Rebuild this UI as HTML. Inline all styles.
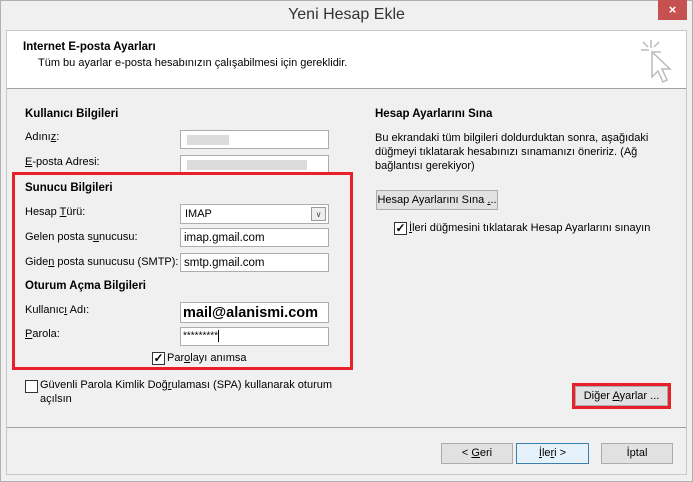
<!DOCTYPE html>
<html><head><meta charset="utf-8"><style>
*{margin:0;padding:0;box-sizing:border-box}
body{width:693px;height:482px;background:#f0f0f0;font-family:"Liberation Sans",sans-serif;font-size:11px;color:#000;position:relative;overflow:hidden}
.a{position:absolute;white-space:nowrap}
.b{font-weight:bold;font-size:11.5px}
.in{position:absolute;background:#fff;border:1px solid #abadb3;height:19px}
.btn{position:absolute;background:#e1e1e1;border:1px solid #acacac;text-align:center;line-height:18px;font-size:11px}
.cb{position:absolute;width:13px;height:13px;border:1px solid #333;background:#fff;font-size:12px;line-height:11px;text-align:center;font-weight:bold}
u{text-decoration:underline}
</style></head><body>
<div class="a" style="left:0;top:0;width:693px;height:482px;border:1px solid #b0b0b0"></div>
<div class="a" style="left:0;top:6px;width:693px;text-align:center;font-size:16px;color:#333">Yeni Hesap Ekle</div>
<div class="a" style="left:658px;top:0;width:29px;height:20px;background:#c75050;color:#fff;text-align:center;font-size:13px;line-height:20px;font-weight:bold">×</div>
<div class="a" style="left:6px;top:30px;width:681px;height:445px;border:1px solid #c8c8c8;background:#f0f0f0"></div>
<div class="a" style="left:7px;top:31px;width:679px;height:58px;background:#fff;border-bottom:1px solid #a0a0a0"></div>
<div class="a b" style="left:23px;top:41px">Internet E-posta Ayarları</div>
<div class="a" style="left:38px;top:57px">Tüm bu ayarlar e-posta hesabınızın çalışabilmesi için gereklidir.</div>
<svg class="a" style="left:638px;top:37px" width="40" height="50" viewBox="0 0 40 50" fill="none" stroke="#bbb" stroke-width="1.5">
<path d="M13 3v8M3 13h8M5 5l5 5M21 5l-5 5M15 15h8"/>
<path d="M14 15l0 25 6-6 5 11 4-2-5-11 8 0z" fill="#fff"/>
</svg>
<div class="a b" style="left:25px;top:108px">Kullanıcı Bilgileri</div>
<div class="a" style="left:25px;top:131px">Adını<u>z</u>:</div>
<div class="in" style="left:180px;top:130px;width:149px"><div style="position:absolute;left:6px;top:4px;width:42px;height:10px;background:#ccc;opacity:.7"></div></div>
<div class="a" style="left:25px;top:156px"><u>E</u>-posta Adresi:</div>
<div class="in" style="left:180px;top:155px;width:149px"><div style="position:absolute;left:6px;top:4px;width:120px;height:10px;background:#ccc;opacity:.7"></div></div>
<div class="a" style="left:12px;top:172px;width:341px;height:198px;border:3px solid #e8202a"></div>
<div class="a b" style="left:25px;top:182px">Sunucu Bilgileri</div>
<div class="a" style="left:25px;top:206px">Hesap <u>T</u>ürü:</div>
<div class="in" style="left:180px;top:204px;width:149px;height:20px;padding:3px 0 0 4px">IMAP<div style="position:absolute;right:2px;top:2px;width:15px;height:14px;border:1px solid #999;background:#eee;font-size:8px;text-align:center;line-height:13px;color:#444">∨</div></div>
<div class="a" style="left:25px;top:231px">Gelen posta s<u>u</u>nucusu:</div>
<div class="in" style="left:180px;top:228px;width:149px;padding:3px 0 0 3px;font-size:11.5px">imap.gmail.com</div>
<div class="a" style="left:25px;top:256px">Gide<u>n</u> posta sunucusu (SMTP):</div>
<div class="in" style="left:180px;top:253px;width:149px;padding:3px 0 0 3px;font-size:11.5px">smtp.gmail.com</div>
<div class="a b" style="left:25px;top:280px">Oturum Açma Bilgileri</div>
<div class="a" style="left:25px;top:304px">Kullanıc<u>ı</u> Adı:</div>
<div class="in" style="left:180px;top:302px;width:149px;height:21px;padding:2px 0 0 2px;font-size:14.5px;font-weight:bold">mail@alanismi.com</div>
<div class="a" style="left:25px;top:328px"><u>P</u>arola:</div>
<div class="in" style="left:180px;top:327px;width:149px;padding:2px 0 0 2px;font-size:10px">*********<span style="display:inline-block;width:1px;height:12px;background:#000;vertical-align:middle"></span></div>
<div class="cb" style="left:152px;top:352px">✓</div>
<div class="a" style="left:167px;top:352px">Par<u>o</u>layı anımsa</div>
<div class="cb" style="left:25px;top:380px"></div>
<div class="a" style="left:40px;top:379px">Güvenli Parola Kimlik Doğ<u>r</u>ulaması (SPA) kullanarak oturum</div>
<div class="a" style="left:40px;top:393px">açılsın</div>
<div class="a b" style="left:375px;top:108px">Hesap Ayarlarını Sına</div>
<div class="a" style="left:375px;top:131px;line-height:14px;white-space:normal;width:280px">Bu ekrandaki tüm bilgileri doldurduktan sonra, aşağıdaki düğmeyi tıklatarak hesabınızı sınamanızı öneririz. (Ağ bağlantısı gerekiyor)</div>
<div class="btn" style="left:376px;top:190px;width:122px;height:20px">Hesap Ayarlarını Sına <u>.</u>..</div>
<div class="cb" style="left:394px;top:222px">✓</div>
<div class="a" style="left:409px;top:222px"><u>İ</u>leri düğmesini tıklatarak Hesap Ayarlarını sınayın</div>
<div class="a" style="left:572px;top:383px;width:99px;height:26px;border:3px solid #e8202a"></div>
<div class="btn" style="left:575px;top:386px;width:93px;height:20px">Diğer <u>A</u>yarlar ...</div>
<div class="a" style="left:7px;top:427px;width:679px;height:1px;background:#a0a0a0"></div>
<div class="btn" style="left:441px;top:443px;width:72px;height:21px;line-height:19px">&lt; <u>G</u>eri</div>
<div class="btn" style="left:516px;top:443px;width:73px;height:21px;line-height:19px;border-color:#3c7fb1;background:#e5f1fb"><u>İ</u>le<u>r</u>i &gt;</div>
<div class="btn" style="left:601px;top:443px;width:72px;height:21px;line-height:19px">İptal</div>
</body></html>
